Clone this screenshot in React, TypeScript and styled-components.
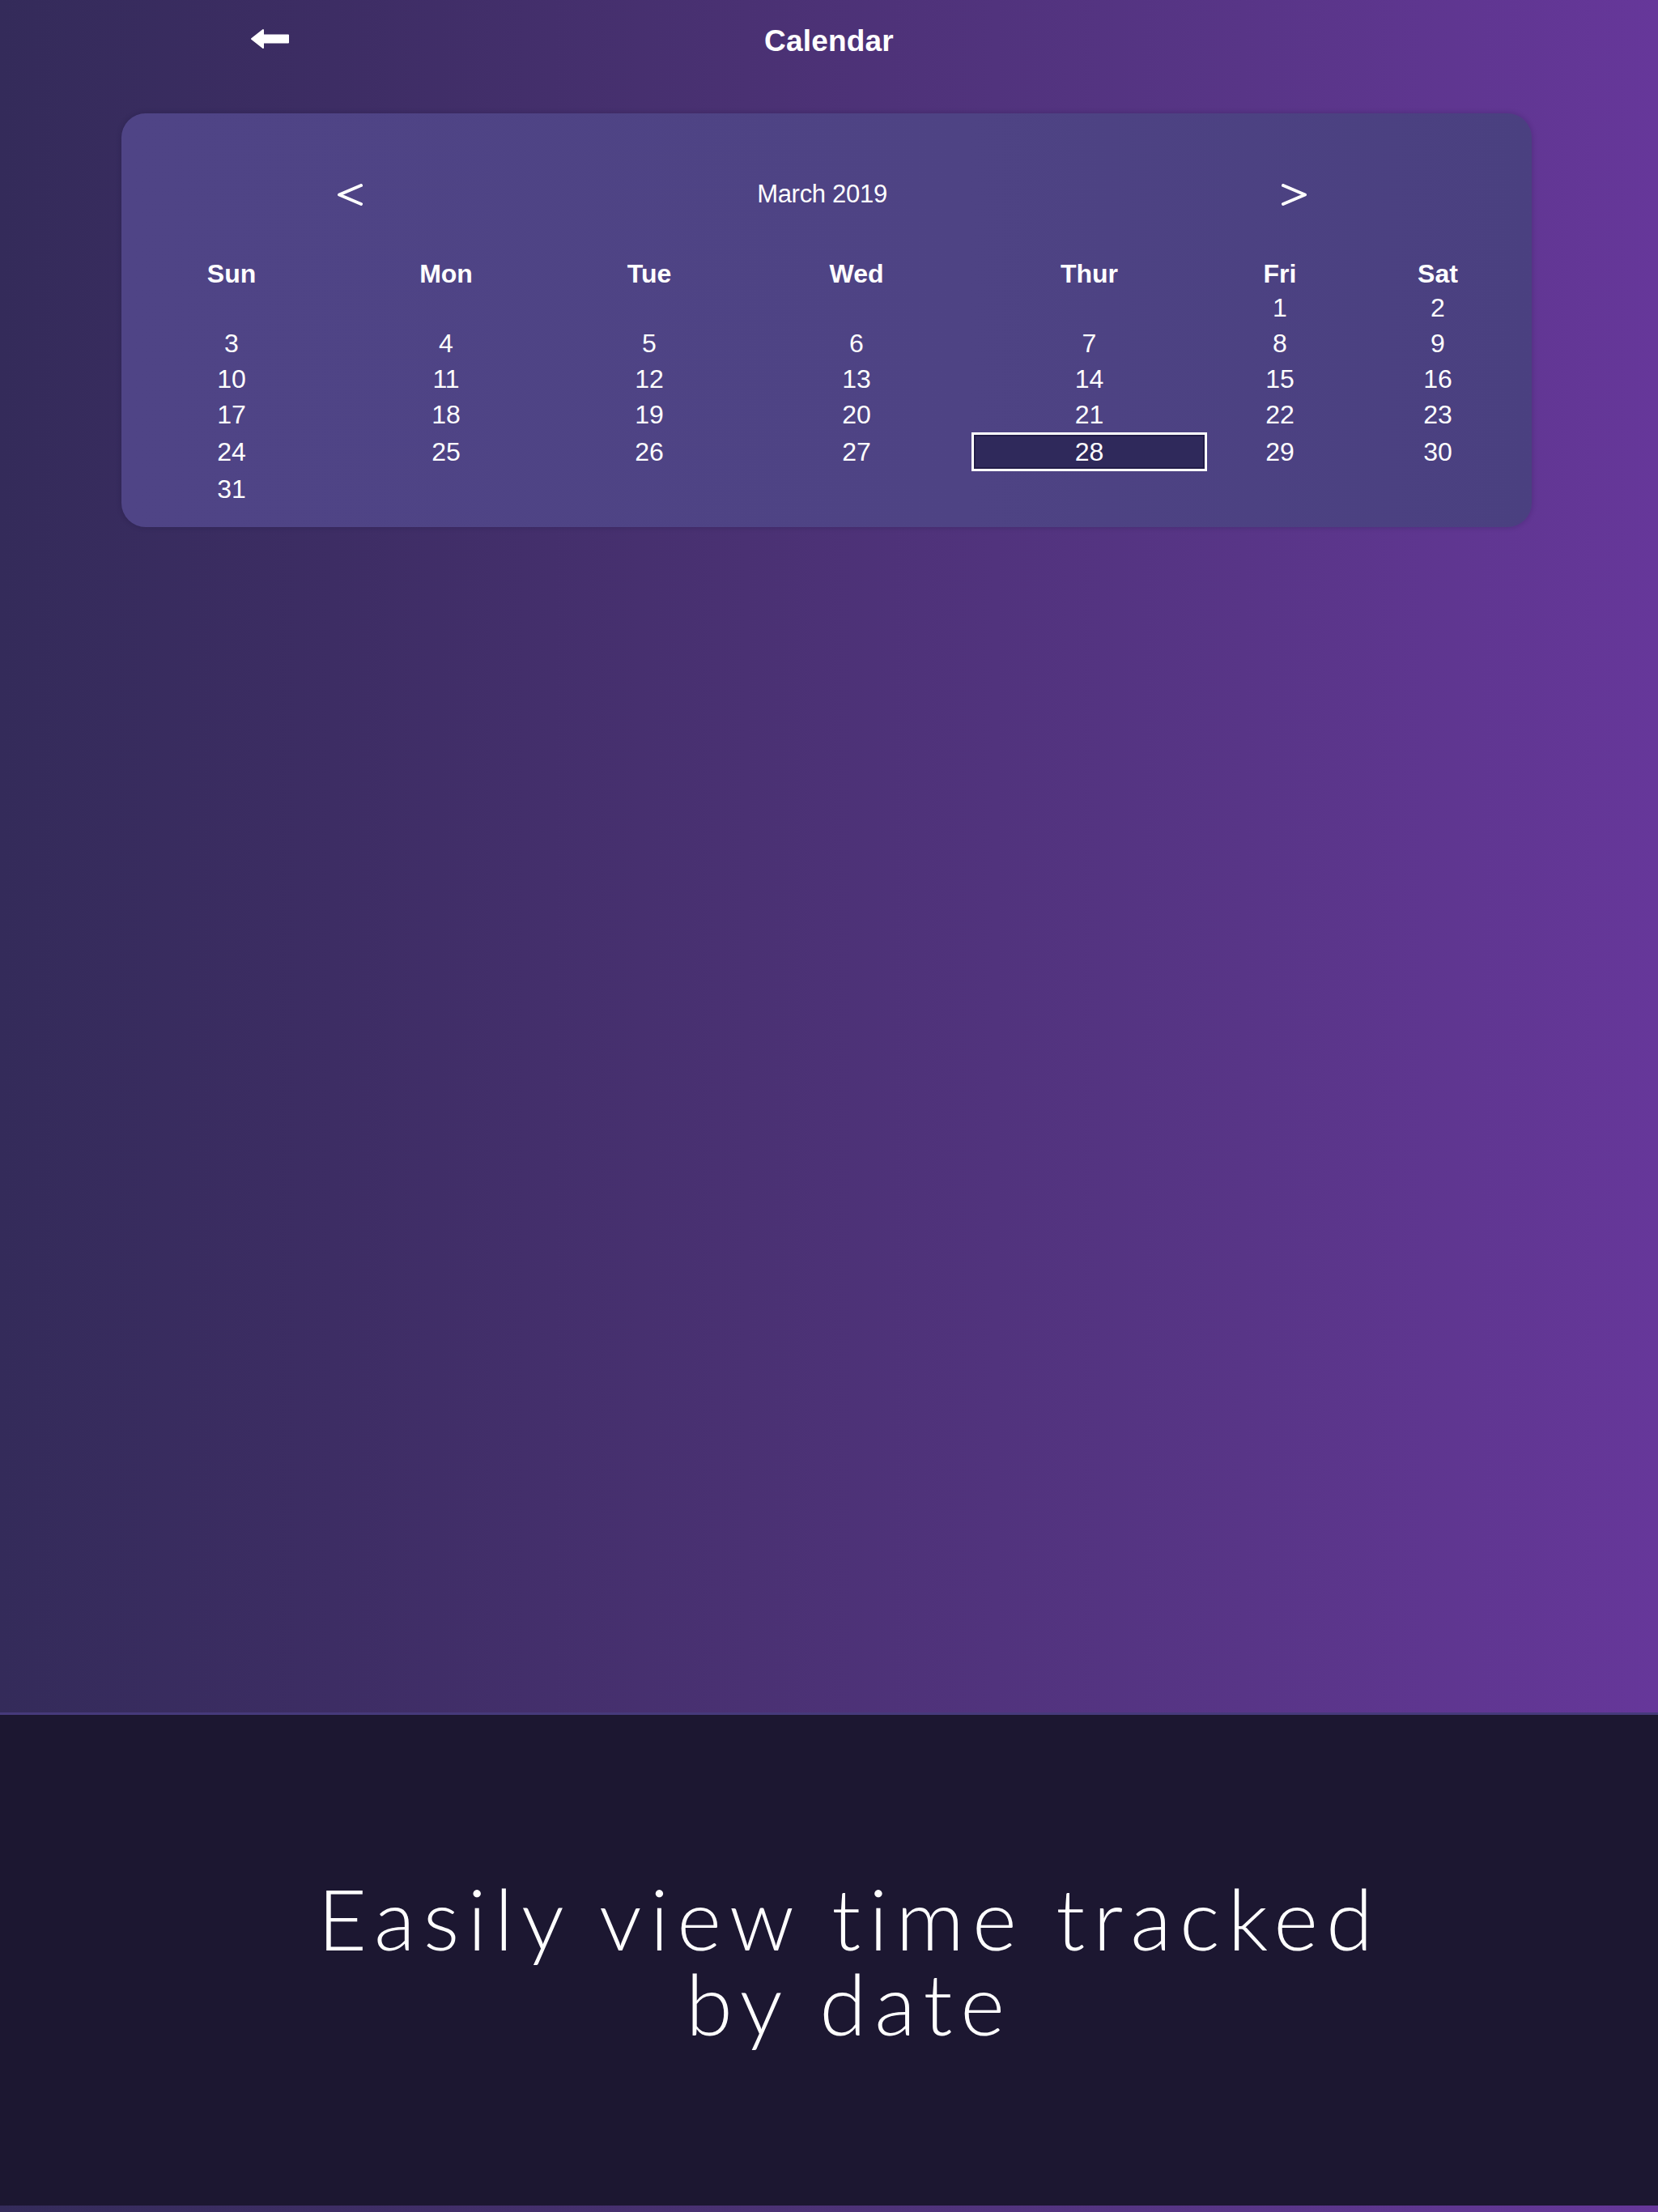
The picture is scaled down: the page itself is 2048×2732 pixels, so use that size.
import React from "react";
import styled, { createGlobalStyle } from "styled-components";

const GlobalStyle = createGlobalStyle`
  html, body {
    margin: 0;
    padding: 0;
  }
  body {
    font-family: "Liberation Sans", Arial, sans-serif;
    color: #ffffff;
  }
`;

const Page = styled.div`
  width: 2048px;
  height: 2732px;
  display: flex;
  flex-direction: column;
  background: linear-gradient(
    90deg,
    #342b5a 0%,
    #3d2d64 20%,
    #4a3173 45%,
    #583587 75%,
    #66379a 100%
  );
  overflow: hidden;
`;

const Screen = styled.div`
  height: 2115px;
  display: flex;
  flex-direction: column;
`;

const Header = styled.header`
  height: 100px;
  box-sizing: border-box;
  padding-top: 30px;
  display: grid;
  grid-template-columns: 1fr auto 1fr;
  align-items: start;
`;

const BackButton = styled.button`
  justify-self: start;
  margin-left: 310px;
  margin-top: 5px;
  padding: 0;
  border: 0;
  background: transparent;
  display: flex;
  cursor: pointer;
`;

const Title = styled.h1`
  margin: 0;
  font-size: 37px;
  font-weight: 700;
  line-height: normal;
  letter-spacing: 0.2px;
`;

const Card = styled.section`
  margin: 40px 0 0 150px;
  width: 1742px;
  box-sizing: border-box;
  padding: 82px 11px 25px 8px;
  border-radius: 30px;
  background: linear-gradient(90deg, #4f4486 0%, #4e4384 60%, #4a4080 100%);
  box-shadow: 0 0 6px rgba(20, 14, 50, 0.25);
`;

const NavRow = styled.div`
  height: 36px;
  display: flex;
  align-items: center;
  justify-content: center;
  gap: 487px;
  padding-right: 8px;
`;

const NavButton = styled.button`
  padding: 0;
  border: 0;
  background: transparent;
  display: flex;
  cursor: pointer;
`;

const Month = styled.div`
  font-size: 31px;
  line-height: normal;
  letter-spacing: -0.3px;
`;

const Grid = styled.div`
  margin-top: 62px;
  display: grid;
  grid-template-columns: 256px 274px 228px 284px 291px 180px 210px;
  grid-template-rows: 38px;
  grid-auto-rows: minmax(44px, auto);
  align-items: center;
`;

const DayName = styled.div`
  text-align: center;
  font-size: 32px;
  font-weight: 700;
  line-height: 37px;
  align-self: start;
`;

const DayCell = styled.div<{ $selected?: boolean }>`
  text-align: center;
  font-size: 32px;
  line-height: 44px;
  box-sizing: border-box;
  ${(p) =>
    p.$selected &&
    `
    height: 48px;
    line-height: 42px;
    border: 3px solid #ffffff;
    background: #2f295b;
    box-shadow: inset 0 0 0 2px #221c48;
  `}
`;

const Caption = styled.div`
  height: 609px;
  box-sizing: border-box;
  border-top: 3px solid #463a7b;
  background: #1c1731;
  display: flex;
  align-items: center;
  justify-content: center;
  padding-left: 50px;
`;

const CaptionText = styled.p`
  margin: 0;
  max-width: 1400px;
  font-family: Lato, "Open Sans", sans-serif;
  font-weight: 300;
  font-size: 105px;
  line-height: 105px;
  letter-spacing: 10px;
  text-align: center;
  color: #ffffff;
`;

const days = ["Sun", "Mon", "Tue", "Wed", "Thur", "Fri", "Sat"];

// March 2019 begins on a Friday
const cells: (number | null)[] = [
  ...Array(5).fill(null),
  ...Array.from({ length: 31 }, (_, i) => i + 1),
];

function BackArrow() {
  return (
    <svg width="48" height="26" viewBox="0 0 48 26">
      <path
        d="M1 13 L15 2 L15 8.5 L46 8.5 L46 17.5 L15 17.5 L15 24 Z"
        fill="#ffffff"
        stroke="#ffffff"
        strokeWidth="2"
        strokeLinejoin="round"
      />
    </svg>
  );
}

function Chevron({ dir }: { dir: "left" | "right" }) {
  const pts = dir === "left" ? "30,2 3,13.5 30,25" : "2,2 29,13.5 2,25";
  return (
    <svg width="32" height="27" viewBox="0 0 32 27">
      <polyline
        points={pts}
        fill="none"
        stroke="#ffffff"
        strokeWidth="4"
        strokeLinecap="round"
        strokeLinejoin="round"
      />
    </svg>
  );
}

export default function App() {
  const selected = 28;
  return (
    <>
      <GlobalStyle />
      <Page>
        <Screen>
          <Header>
            <BackButton aria-label="Back">
              <BackArrow />
            </BackButton>
            <Title>Calendar</Title>
            <span />
          </Header>
          <Card>
            <NavRow>
              <NavButton aria-label="Previous month">
                <Chevron dir="left" />
              </NavButton>
              <Month>March 2019</Month>
              <NavButton aria-label="Next month">
                <Chevron dir="right" />
              </NavButton>
            </NavRow>
            <Grid>
              {days.map((d) => (
                <DayName key={d}>{d}</DayName>
              ))}
              {cells.map((n, i) => (
                <DayCell key={i} $selected={n === selected}>
                  {n ?? ""}
                </DayCell>
              ))}
            </Grid>
          </Card>
        </Screen>
        <Caption>
          <CaptionText>Easily view time tracked by date</CaptionText>
        </Caption>
      </Page>
    </>
  );
}
